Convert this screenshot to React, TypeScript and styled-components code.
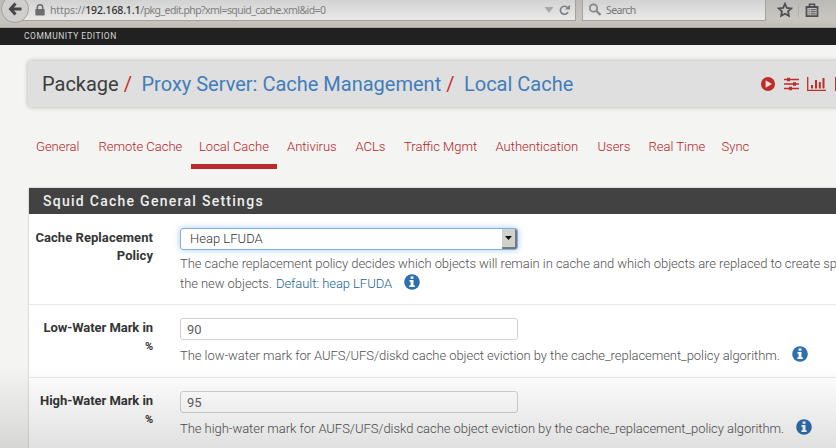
import React from 'react';
import styled, { createGlobalStyle } from 'styled-components';

const GlobalStyle = createGlobalStyle`
  * { box-sizing: border-box; }
  body { margin: 0; overflow: hidden; background: #f4f4f2; font-family: Roboto, 'Open Sans', sans-serif; }
`;

const Page = styled.div`
  position: relative;
  width: 836px;
  height: 448px;
  overflow: hidden;
  background: #f4f4f2;
  white-space: nowrap;
`;

const BrowserBar = styled.header`
  display: flex;
  align-items: flex-start;
  height: 28px;
  background: linear-gradient(#bcbab7, #c9c6c1 70%, #c3beb7);
  border-bottom: 1px solid #aaa69f;
  font-family: 'Noto Sans', 'DejaVu Sans', sans-serif;
`;

const BackButton = styled.div`
  flex: none;
  position: relative;
  z-index: 1;
  width: 28px;
  height: 28px;
  margin: -5px -14px 0 1px;
  border-radius: 50%;
  border: 1px solid #a3a19e;
  background: #d0cfcd;
  display: flex;
  align-items: center;
  justify-content: center;
`;

const AddressField = styled.div`
  flex: none;
  display: flex;
  align-items: center;
  width: 561px;
  height: 21px;
  padding: 0 5px 0 19px;
  background: linear-gradient(#d2d2d2, #e9e9e9);
  border: 1px solid #a5a29d;
  border-top: 0;
`;

const Url = styled.span`
  flex: 1;
  margin-left: 5px;
  font-size: 10.5px;
  line-height: 20px;
  letter-spacing: -0.13px;
  color: #7d7d7d;
`;

const UrlHost = styled.span`
  color: #303030;
  font-weight: 500;
`;

const UrlPath = styled.span`
  letter-spacing: -0.57px;
`;

const SearchField = styled.div`
  flex: none;
  display: flex;
  align-items: center;
  gap: 4px;
  width: 184px;
  height: 21px;
  margin-left: 6px;
  padding-left: 5px;
  background: linear-gradient(#d2d2d2, #e9e9e9);
  border: 1px solid #a5a29d;
  border-top: 0;
  font-size: 10.5px;
  line-height: 20px;
  letter-spacing: -0.6px;
  color: #777;
`;

const BrowserActions = styled.div`
  display: flex;
  align-items: center;
  height: 20px;
  margin-left: 11px;
`;

const ActionDivider = styled.span`
  width: 1px;
  height: 15px;
  margin: 0 6px 0 5px;
  background: #b4b1ac;
`;

const EditionBar = styled.div`
  height: 17px;
  padding-left: 24px;
  background: #212121;
  color: #d6d6d6;
  font-size: 8.5px;
  line-height: 16px;
  letter-spacing: 0.5px;
`;

const Breadcrumb = styled.nav`
  display: flex;
  align-items: center;
  height: 46px;
  margin: 16px -20px 0 28px;
  padding-left: 14px;
  background: #dfdfdf;
  border-radius: 3px;
  box-shadow: 0 0 5px rgba(0, 0, 0, 0.28);
  font-size: 20px;
  line-height: 24px;
`;

const Crumb = styled.span<{ $link?: boolean }>`
  color: ${(p) => (p.$link ? '#3f7dbb' : '#3c3c3c')};
`;

const Slash = styled.span`
  margin: 0 9.5px 0 5px;
  color: #c9302c;
`;

const HeaderActions = styled.div`
  display: flex;
  align-items: center;
  gap: 8.5px;
  margin-left: auto;
  padding-right: 7.5px;
`;

const Tabs = styled.div`
  display: flex;
  gap: 2px;
  height: 42px;
  margin: 20px 0 0 28px;
`;

const Tab = styled.a<{ $width: number; $active?: boolean }>`
  flex: none;
  width: ${(p) => p.$width}px;
  padding: 11px 0 0 8px;
  border-bottom: 5px solid ${(p) => (p.$active ? '#b92b2b' : 'transparent')};
  font-size: 13px;
  font-weight: 300;
  line-height: 18px;
  color: #b3221f;
`;

const Panel = styled.section`
  margin: 19px -20px 0 29px;
  background: #fff;
  box-shadow: 0 0 2px rgba(0, 0, 0, 0.25);
`;

const PanelTitle = styled.h2`
  height: 26px;
  margin: 0;
  padding-left: 14px;
  background: #414241;
  color: #eee;
  font-size: 14px;
  font-weight: 500;
  line-height: 27px;
  letter-spacing: 1.27px;
`;

const Row = styled.div<{ $height: number; $top: number }>`
  display: flex;
  height: ${(p) => p.$height}px;
  padding-top: ${(p) => p.$top}px;
  border-bottom: 1px solid #e9e9e9;
`;

const Label = styled.label<{ $spacing?: number }>`
  flex: none;
  width: 124px;
  margin: 1px 27px 0 0;
  text-align: right;
  font-size: 13px;
  font-weight: 700;
  line-height: 18px;
  letter-spacing: ${(p) => p.$spacing ?? 0}px;
  color: #353535;
`;

const Percent = styled.small`
  font-size: 11px;
`;

const Field = styled.div`
  flex: 1;
`;

const TextField = styled.div`
  width: 338px;
  height: 22px;
  padding-left: 6px;
  border: 1px solid #d2d2d2;
  border-radius: 3px;
  background: rgba(255, 255, 255, 0.5);
  font-size: 13px;
  line-height: 21px;
  color: #606060;
`;

const SelectField = styled(TextField)`
  display: flex;
  justify-content: space-between;
  padding-left: 9px;
  border-color: #80afe0;
  box-shadow: 0 0 6px rgba(102, 170, 235, 0.6);
  font-weight: 300;
  line-height: 20px;
  letter-spacing: 0.02px;
  color: #333;
`;

const SelectArrow = styled.span`
  display: flex;
  align-items: center;
  justify-content: center;
  width: 15px;
  height: 20px;
  background: #d2d0cd;
  border: solid #77797c;
  border-width: 0 2px 2px 0;
  border-radius: 0 2px 2px 0;
`;

const Help = styled.p<{ $top?: number }>`
  display: flex;
  align-items: center;
  height: 20px;
  margin: ${(p) => p.$top ?? 0}px 0 0;
  font-size: 13px;
  font-weight: 300;
  line-height: 20px;
  letter-spacing: -0.055px;
  color: #505050;
`;

const DefaultValue = styled.span`
  margin-left: 4px;
  color: #1b6391;
`;

const InfoSlot = styled.span`
  display: flex;
  margin: -4px 0 0 12px;
`;

const Shade = styled.div`
  position: absolute;
  inset: auto 0 0 0;
  height: 82px;
  pointer-events: none;
  background: linear-gradient(rgba(0, 0, 0, 0), rgba(0, 0, 0, 0.12));
`;

const InfoIcon = () => (
  <InfoSlot>
    <svg width="16" height="16" viewBox="0 0 16 16">
      <circle cx="8" cy="8" r="7.8" fill="#2e6fae" />
      <path d="M6.6 2.6h2.9v2.2H6.6zM5.5 6.1h4v5.2h1.2v1.6H5.4v-1.6h1.2V7.7H5.5z" fill="#fff" />
    </svg>
  </InfoSlot>
);

const tabs = [
  { label: 'General', width: 60.5 },
  { label: 'Remote Cache', width: 98.5 },
  { label: 'Local Cache', width: 86, active: true },
  { label: 'Antivirus', width: 66.5 },
  { label: 'ACLs', width: 46.5 },
  { label: 'Traffic Mgmt', width: 89.5 },
  { label: 'Authentication', width: 100 },
  { label: 'Users', width: 49 },
  { label: 'Real Time', width: 71 },
  { label: 'Sync', width: 45 },
];

export default function App() {
  return (
    <>
      <GlobalStyle />
      <Page>
        <BrowserBar>
          <BackButton>
            <svg width="14" height="14" viewBox="0 0 14 14" fill="none" stroke="#464646" strokeWidth="3">
              <path d="M7.5 1.5 2.5 7l5 5.5M3 7h10.5" />
            </svg>
          </BackButton>
          <AddressField>
            <svg width="10" height="12" viewBox="0 0 10 12">
              <path d="M2.3 6V3.5a2.7 2.7 0 0 1 5.4 0V6" fill="none" stroke="#6d6d6d" strokeWidth="1.6" />
              <rect x="0.3" y="5" width="9.4" height="6.5" rx="0.8" fill="#6d6d6d" />
            </svg>
            <Url>https://<UrlHost>192.168.1.1</UrlHost><UrlPath>/pkg_edit.php?xml=squid_cache.xml&amp;id=0</UrlPath></Url>
            <svg width="27" height="12" viewBox="0 0 27 12">
              <path d="M1.5 3h9L6 9z" fill="#a7a7a7" />
              <path d="M24.5 3.7A4 4 0 1 0 25 8" fill="none" stroke="#7c8085" strokeWidth="1.7" />
              <path d="M22 5.5h5V.8z" fill="#7c8085" />
            </svg>
          </AddressField>
          <SearchField>
            <svg width="14" height="14" viewBox="0 0 14 14" fill="none" stroke="#858585">
              <circle cx="5.5" cy="5" r="3.7" strokeWidth="1.7" />
              <path d="M8.3 7.8 12.5 12" strokeWidth="2.3" />
            </svg>
            Search
          </SearchField>
          <BrowserActions>
            <svg width="16" height="16" viewBox="0 0 16 16">
              <path d="M8 1.8l1.9 4 4.4.6-3.2 3 .8 4.4L8 11.7l-3.9 2.1.8-4.4-3.2-3 4.4-.6z" fill="none" stroke="#4e4f53" strokeWidth="1.8" />
            </svg>
            <ActionDivider />
            <svg width="14" height="15" viewBox="0 0 14 15" fill="none" stroke="#4e4f53">
              <path d="M1.5 4h11v9.2h-11z" strokeWidth="1.8" />
              <path d="M4.5 3.3V1.3h5v2" strokeWidth="1.6" />
              <path d="M3.5 6.7h1.2m1 0h5M3.5 8.8h1.2m1 0h5M3.5 10.9h1.2m1 0h5" strokeWidth="1" />
            </svg>
          </BrowserActions>
        </BrowserBar>
        <EditionBar>COMMUNITY EDITION</EditionBar>
        <Breadcrumb>
          <Crumb>Package</Crumb>
          <Slash>/</Slash>
          <Crumb $link>Proxy Server: Cache Management</Crumb>
          <Slash>/</Slash>
          <Crumb $link>Local Cache</Crumb>
          <HeaderActions>
            <svg width="14" height="14" viewBox="0 0 14 14">
              <circle cx="7" cy="7" r="7" fill="#bd2d2a" />
              <path d="M4.6 3.200v7.600L11 7z" fill="#f1dddd" />
            </svg>
            <svg width="15" height="14" viewBox="0 0 15 14" stroke="#bd2d2a" fill="none">
              <path d="M0 2.5h15M0 7h15M0 11.5h15" strokeWidth="1.5" />
              <path d="M4.5.7v3.600M10.5 5.200v3.600M6.500 9.700v3.600" strokeWidth="3" />
            </svg>
            <svg width="19" height="14" viewBox="0 0 19 14" stroke="#bd2d2a" fill="none">
              <path d="M.7 0v13.300H19" strokeWidth="1.3" />
              <path d="M5 11.500V8M9 11.500V3M12.800 11.500V5M16.500 11.500V1" strokeWidth="2" />
            </svg>
            <svg width="14" height="14" viewBox="0 0 14 14">
              <path d="M.7.7h12v12.600h-12zM3 4h7M3 7h7M3 10h7" fill="none" stroke="#bd2d2a" strokeWidth="1.5" />
            </svg>
          </HeaderActions>
        </Breadcrumb>
        <Tabs>
          {tabs.map((t) => (
            <Tab key={t.label} $width={t.width} $active={t.active}>{t.label}</Tab>
          ))}
        </Tabs>
        <Panel>
          <PanelTitle>Squid Cache General Settings</PanelTitle>
          <Row $height={91} $top={14}>
            <Label $spacing={0.06}>Cache Replacement<br />Policy</Label>
            <Field>
              <SelectField>
                Heap LFUDA
                <SelectArrow>
                  <svg width="7" height="4" viewBox="0 0 7 4"><path d="M0 0h7L3.5 4z" fill="#111" /></svg>
                </SelectArrow>
              </SelectField>
              <Help $top={4}>The cache replacement policy decides which objects will remain in cache and which objects are replaced to create space for</Help>
              <Help>the new objects. <DefaultValue>Default: heap LFUDA</DefaultValue><InfoIcon /></Help>
            </Field>
          </Row>
          <Row $height={73} $top={13}>
            <Label $spacing={-0.06}>Low-Water Mark in<br /><Percent>%</Percent></Label>
            <Field>
              <TextField>90</TextField>
              <Help $top={6}>The low-water mark for AUFS/UFS/diskd cache object eviction by the cache_replacement_policy algorithm.<InfoIcon /></Help>
            </Field>
          </Row>
          <Row $height={90} $top={13}>
            <Label $spacing={-0.06}>High-Water Mark in<br /><Percent>%</Percent></Label>
            <Field>
              <TextField>95</TextField>
              <Help $top={6}>The high-water mark for AUFS/UFS/diskd cache object eviction by the cache_replacement_policy algorithm.<InfoIcon /></Help>
            </Field>
          </Row>
        </Panel>
        <Shade />
      </Page>
    </>
  );
}
